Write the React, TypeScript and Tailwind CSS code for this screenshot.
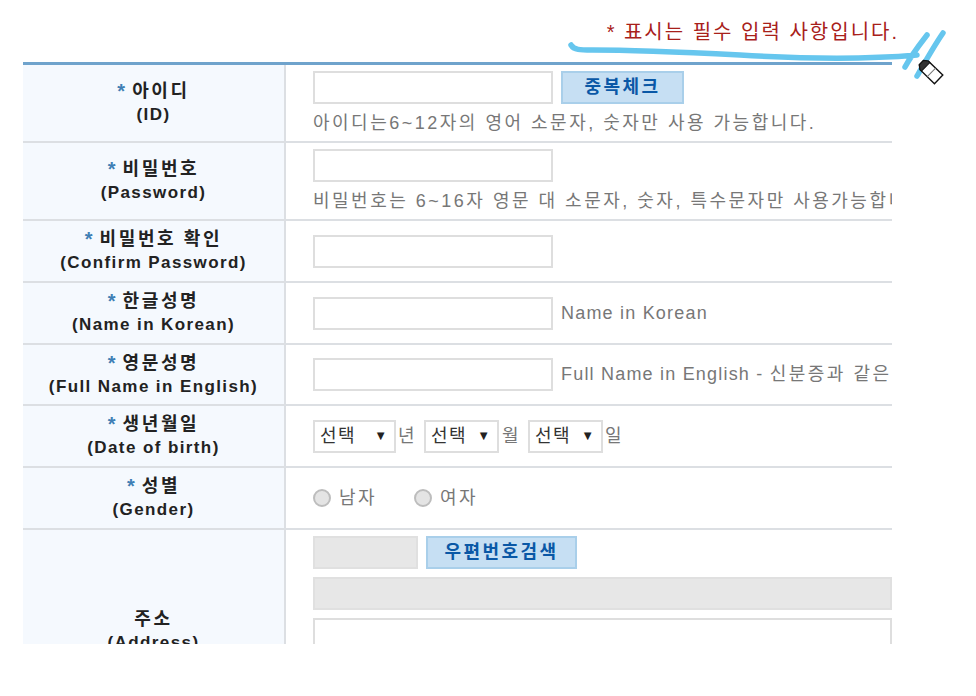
const fontStack = { fontFamily: '"Liberation Sans", "Noto Sans CJK KR", sans-serif' }

function Row({ ko, en, h, children }: { ko: string; en: string; h: string; children: React.ReactNode }) {
  return (
    <div className={`flex border-b-2 border-[#dcdfe3] ${h}`}>
      <div className="w-[263px] shrink-0 bg-[#f5f9fe] border-r-2 border-[#dcdfe3] flex flex-col items-center justify-center text-[#222] font-bold leading-[24px]">
        <div className="flex items-center text-[18px] tracking-[2.6px]">
          <span className="text-[#3f7fb5] text-[20px] leading-[24px] mr-[7px] tracking-normal">*</span>
          <span>{ko}</span>
        </div>
        <div className="text-[17px] tracking-[1.4px]">{en}</div>
      </div>
      <div className="flex-1 min-w-0 pl-[27px] flex flex-col justify-center overflow-hidden whitespace-nowrap text-[#777] text-[18px]">
        {children}
      </div>
    </div>
  )
}

function TextBox({ w = 'w-[240px]', gray = false }: { w?: string; gray?: boolean }) {
  return <div className={`${w} h-[33px] shrink-0 border-2 ${gray ? 'bg-[#e7e7e7] border-[#e0e0e0]' : 'bg-white border-[#dedede]'}`} />
}

function BlueButton({ children, w }: { children: React.ReactNode; w: string }) {
  return (
    <div className={`${w} h-[33px] shrink-0 flex items-center justify-center bg-[#c6dff3] border-2 border-[#a9cfea] text-[#0a58a6] text-[18px] font-bold tracking-[2.4px]`}>
      {children}
    </div>
  )
}

function SelectBox({ w }: { w: string }) {
  return (
    <div className={`${w} h-[33px] shrink-0 flex items-center justify-between pl-[5px] pr-[7px] bg-white border-2 border-[#dedede] text-[#333] text-[18px] tracking-[1.5px]`}>
      <span>선택</span>
      <span className="text-[#222] text-[13px] tracking-normal">▼</span>
    </div>
  )
}

function Radio({ children, className = '' }: { children: React.ReactNode; className?: string }) {
  return (
    <div className={`flex items-center gap-[8px] ${className}`}>
      <span className="w-[18px] h-[18px] rounded-full border-2 border-[#bdbdbd] bg-[#e4e4e4]" />
      <span className="tracking-[2.5px]">{children}</span>
    </div>
  )
}

export default function App() {
  return (
    <div className="relative w-[976px] h-[696px] bg-white overflow-hidden" style={fontStack}>
      <div className="h-[62px] flex justify-end items-start pt-[18px] pr-[77px] text-[#a8201a] text-[20px] leading-[28px] tracking-[2px]">
        * 표시는 필수 입력 사항입니다.
      </div>

      <div className="ml-[23px] w-[869px] h-[582px] overflow-hidden border-t-[3px] border-[#6fa3cc]">
        <Row ko="아이디" en="(ID)" h="h-[78px]">
          <div className="flex gap-[8px]">
            <TextBox />
            <BlueButton w="w-[123px]">중복체크</BlueButton>
          </div>
          <div className="mt-[8px] leading-[23px] tracking-[2.5px]">아이디는6~12자의 영어 소문자, 숫자만 사용 가능합니다.</div>
        </Row>
        <Row ko="비밀번호" en="(Password)" h="h-[78px]">
          <TextBox />
          <div className="mt-[8px] leading-[23px] tracking-[2.5px]">비밀번호는 6~16자 영문 대 소문자, 숫자, 특수문자만 사용가능합니다.</div>
        </Row>
        <Row ko="비밀번호 확인" en="(Confirm Password)" h="h-[62px]">
          <TextBox />
        </Row>
        <Row ko="한글성명" en="(Name in Korean)" h="h-[62px]">
          <div className="flex items-center gap-[8px]">
            <TextBox />
            <span className="tracking-[1.2px]">Name in Korean</span>
          </div>
        </Row>
        <Row ko="영문성명" en="(Full Name in English)" h="h-[61px]">
          <div className="flex items-center gap-[8px]">
            <TextBox />
            <span className="tracking-[1.2px]">Full Name in English - <span className="tracking-[2.5px]">신분증과 같은 영문 성명</span></span>
          </div>
        </Row>
        <Row ko="생년월일" en="(Date of birth)" h="h-[62px]">
          <div className="flex items-center">
            <SelectBox w="w-[83px]" />
            <span className="ml-[2px] w-[26px]">년</span>
            <SelectBox w="w-[75px]" />
            <span className="ml-[3px] w-[26px]">월</span>
            <SelectBox w="w-[75px]" />
            <span className="ml-[2px]">일</span>
          </div>
        </Row>
        <Row ko="성별" en="(Gender)" h="h-[62px]">
          <div className="flex items-center">
            <Radio className="w-[101px]">남자</Radio>
            <Radio>여자</Radio>
          </div>
        </Row>
        <div className="flex h-[200px]">
          <div className="w-[263px] shrink-0 bg-[#f5f9fe] border-r-2 border-[#dcdfe3] flex flex-col items-center pt-[78px] text-[#222] font-bold leading-[23px]">
            <div className="text-[18px] tracking-[2.6px]">주소</div>
            <div className="text-[17px] tracking-[1.4px]">(Address)</div>
          </div>
          <div className="flex-1 min-w-0 pl-[27px] pt-[6px] flex flex-col gap-[8px]">
            <div className="flex gap-[8px]">
              <TextBox w="w-[105px]" gray />
              <BlueButton w="w-[151px]">우편번호검색</BlueButton>
            </div>
            <TextBox w="w-full" gray />
            <TextBox w="w-full" />
          </div>
        </div>
      </div>

      {/* pen scribble */}
      <svg className="absolute left-0 top-0 pointer-events-none" width="976" height="696" viewBox="0 0 976 696" fill="none">
        <path
          d="M571 45 C574 50 580 50 592 50 C640 50 700 53 740 55 C790 58 860 60 917 55 M927 35 C920 44 912 54 905 67 M943 33 C934 46 925 62 917 76"
          stroke="#66c6ee"
          strokeWidth="5.5"
          strokeLinecap="round"
          strokeLinejoin="round"
        />
        <g transform="translate(930 71) rotate(44)">
          <path d="M-12 -3 L-8 -6 L12 -6 L12 6 L-8 6 L-12 3 Z" fill="#fff" stroke="#111" strokeWidth="1.4" />
          <path d="M-12 -3 L-8 -6 L-6 -6 L-6 6 L-8 6 L-12 3 Z" fill="#333" stroke="#111" strokeWidth="1" />
          <path d="M2 -6 L2 6" stroke="#777" strokeWidth="1" />
        </g>
      </svg>
    </div>
  )
}
